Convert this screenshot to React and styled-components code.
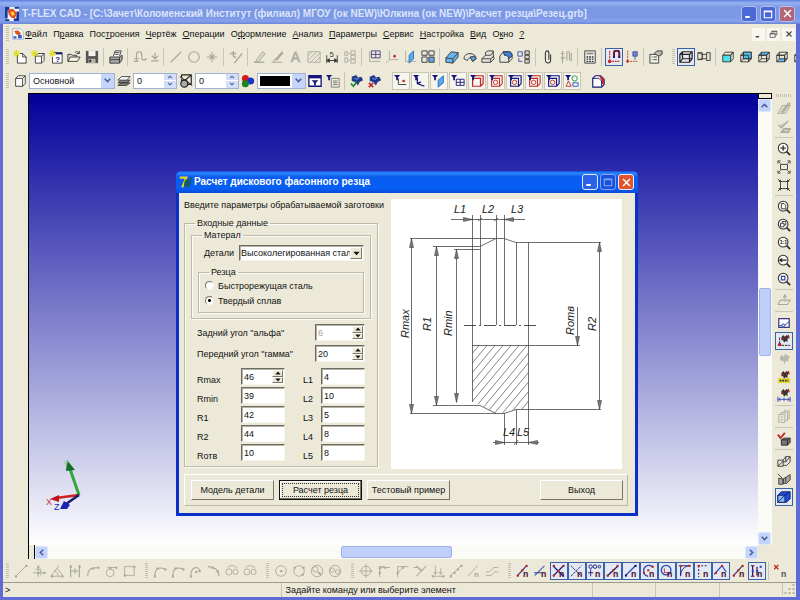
import styled, { createGlobalStyle, css } from "styled-components";
import { useState } from "react";

const GRAY = "#aaa89b";
const INK = "#333";
const NAVY = "#14147a";
const RED = "#c02626";

/* ---------- icons ---------- */

const Cube = ({ front = "none", top = "none", side = "none", back, color = INK }) => (
  <g stroke={color} strokeLinejoin="round">
    <path d="M2 6l3-3.500h9l-3 3.500z" fill={top} />
    <path d="M11 6l3-3.500v7.500l-3 3.500z" fill={side} />
    {back && <path d="M5 2.500h9v7.500H5z" fill={back} />}
    <path d="M2 6h9v7.500H2z" fill={front} />
    {front === "none" && <path d="M5 2.500V10h9M5 10l-3 3.500" />}
  </g>
);

const Star = () => <path d="M4 0v8M0 4h8M1 1l6 6M7 1L1 7" stroke="#dede1e" strokeWidth="1.300" />;

const Funnel = () => <path d="M0 1h7L4.500 4v3h-2V4z" fill={NAVY} />;

const Lens = ({ children }) => (
  <g>
    <circle cx="7" cy="7" r="5.500" fill="#fafaf4" stroke={INK} strokeWidth="1.200" />
    <path d="M11 11l4 4" stroke={INK} strokeWidth="2" />
    {children}
  </g>
);

const Magnet = () => (
  <text x="8" y="15" fontSize="10" fontWeight="bold" fill="#4a1030">
    n
  </text>
);

const Dots = ({ at, color = GRAY }) =>
  at.map(([x, y]) => <rect key={`${x}-${y}`} x={x - 1} y={y - 1} width="2.400" height="2.400" fill={color} />);

const Cutter = () => (
  <g fill="#333">
    <path d="M5 4l2-3 2 2 2-2 3 2-2 3v3l-2-1-2 2-1-3-2 0z" />
    <path d="M10 3l1 2M13 1l1 4M6 5l2 1" stroke={RED} strokeWidth="1.200" />
  </g>
);

const icons = {
  app: (
    <g>
      <path d="M0 0h16v16H0z" fill="#f4f4ff" />
      <path d="M0 0h5v4H3v9H0zM16 16h-6v-3h3V5h3zM0 14h5v2H0zM11 0h5v2h-5z" fill="#16389c" />
      <path d="M3 3l6-1 5 5-3 6-4-1-3-4z" fill="#e2521c" />
      <path d="M6 6l4-1 1 4-3 1z" fill="#ffd24a" />
    </g>
  ),
  doc: (
    <g>
      <path d="M1 1h10l4 4v10H1z" fill="#fff" stroke="#8ea2d8" />
      <path d="M3 4l5-1 4 4-3 3-4-2z" fill="#e2521c" />
      <path d="M8 9h5v5H8zM2 11h4v3H2z" fill="#3c5cc0" />
    </g>
  ),
  newDoc: (
    <g>
      <path d="M5 4h6l4 4v7H5z" fill="#fff" stroke={INK} />
      <path d="M11 4v4h4" stroke={INK} />
      <Star />
    </g>
  ),
  newPart: (
    <g>
      <path d="M5 7h7v8H5zM5 7l3-3h7l-3 3M15 4v8l-3 3" fill="#fff" stroke={INK} />
      <Star />
    </g>
  ),
  newProto: (
    <g>
      <path d="M4 3h11v12H4z" fill="#fff" stroke={INK} />
      <path d="M7 3h8v2H7z" fill={NAVY} />
      <text x="7" y="14" fontSize="9" fontWeight="bold" fill={NAVY}>?</text>
      <Star />
    </g>
  ),
  open: (
    <g stroke={INK}>
      <path d="M1 13V5h4l1 1h5v3" fill="#d8d6c6" />
      <path d="M1 13l3-5h11l-3 5z" fill="#f4f2e4" />
      <path d="M9 3c2-2 4-1 5 1M14 1v3h-3" />
    </g>
  ),
  save: (
    <g>
      <path d="M1 1h14v14H1z" fill="#555" />
      <path d="M4 1h8v6H4z" fill="#f2f2ea" />
      <path d="M4 10h8v5H4z" fill="#b4b4ac" />
      <path d="M5 11h2v3H5z" fill="#222" />
    </g>
  ),
  print: (
    <g stroke={INK}>
      <path d="M5 7l2-6h7l-2 6" fill="#fff" />
      <path d="M1 8h11l3-2v5l-3 4H1z" fill="#aaa" />
      <path d="M1 11h11M12 8v7M7 3h5M7 5h4" />
    </g>
  ),
  undo: <path d="M4 13V5c0-4 6-4 6 0v4c0 3 5 3 5 0M1 10h6M4 13v-3M1 13h5" stroke={GRAY} strokeWidth="1.400" />,
  redo: <path d="M8 1v9M3 6l5 5 5-5M2 14h12" stroke={GRAY} strokeWidth="2" />,
  line: <path d="M2 14L14 2" stroke={GRAY} strokeWidth="1.400" />,
  circle: <circle cx="8" cy="8" r="6" stroke={GRAY} strokeWidth="1.300" />,
  node: <path d="M8 2v12M2 8h12M5 5l6 6M11 5l-6 6" stroke={GRAY} strokeWidth="1.200" />,
  edit: <path d="M1 4h7M5 1v6l3 2M6 15L15 4" stroke={GRAY} strokeWidth="1.500" />,
  pencil: (
    <g stroke={GRAY}>
      <path d="M4 11l7-9 3 2-7 9-4 1z" fill="#d6d4c4" />
      <path d="M1 14h12" strokeWidth="1.500" />
    </g>
  ),
  brush: <path d="M13 2L5 11M14 3L6 12M1 14h12M3 13l2-3" stroke={GRAY} strokeWidth="1.300" />,
  letter: <text x="2" y="14" fontSize="16" fill={GRAY} stroke={GRAY} strokeWidth="0.500">A</text>,
  hatch: <path d="M1 2h14v12H1zM1 7l5-5M1 12L11 2M4 14L15 3M9 14l6-6" stroke={GRAY} />,
  dimension: (
    <g>
      <path d="M2 6v9M14 6v9M2 12h12M2 12l3-2v4zM14 12l-3-2v4z" stroke={INK} fill={INK} />
      <text x="5" y="8" fontSize="9" fill={INK}>5</text>
    </g>
  ),
  block: <path d="M2 2h3v4H2zM2 9h3v5H2zM9 1h5v4H9zM9 6h5v4H9zM9 11h5v4H9zM6 4h2M6 12h2" stroke={GRAY} />,
  plane: (
    <g>
      <path d="M3 1v12h12" stroke={GRAY} />
      <path d="M5 1h10v8H5zM5 5h10M10 1v8" stroke="#3c3c80" />
    </g>
  ),
  axis: (
    <g>
      <path d="M5 1v10h10M5 11l-4 4" stroke={GRAY} />
      <circle cx="11" cy="7" r="1.500" fill={RED} />
    </g>
  ),
  facet: (
    <g>
      <path d="M3 1v12h12" stroke={GRAY} />
      <path d="M7 6l5-5v9l-5 5z" fill="#5aa8e8" stroke="#2a6ac0" />
    </g>
  ),
  multi: (
    <g stroke={INK}>
      <path d="M1 1h6v5H1zM9 1h6v5H9zM1 8h6v6H1z" fill="#e8e8e0" />
      <path d="M9 8h6v6H9z" fill="#6aa6e6" />
    </g>
  ),
  extrude: (
    <g stroke={INK}>
      <path d="M1 9l6-7 8 1v5l-6 7-8-1z" fill="#6ab4ec" />
      <path d="M1 9l8 1 6-7M9 10v5" />
    </g>
  ),
  rotate: (
    <g stroke={INK}>
      <path d="M1 10c0-8 14-8 14 0l-4 3c0-5-5-5-6-1z" fill="#e4e4dc" />
      <path d="M8 8l5-1 2 3-4 3z" fill="#5aa0e0" />
    </g>
  ),
  boss: (
    <g stroke={INK}>
      <path d="M1 10l4-4V3l3-2h6v6l1 3-4 4H1z" fill="#e4e4dc" />
      <path d="M5 6h6l3-4M1 10h10v4M11 10l4-3" />
    </g>
  ),
  fillet: (
    <g stroke={INK}>
      <path d="M1 7l4-5h6c3 0 4 2 4 5v3l-4 4H1z" fill="#e8e8e0" />
      <path d="M5 2h6c3 0 4 2 4 5l-4 3c0-3-2-4-5-4z" fill="#3a80d8" />
      <path d="M11 9v5" />
    </g>
  ),
  assembly: (
    <g stroke={INK}>
      <path d="M9 1h5v4H9zM9 6h5v4H9zM9 11h5v4H9z" fill="#d8d8d0" />
      <path d="M1 2h5v5H1zM2 9v4h4" stroke="#3446b0" />
    </g>
  ),
  clip: <path d="M11 5v6c0 5-6 5-6 0V4c0-4 4-4 4 0v7" stroke={INK} strokeWidth="1.200" />,
  clips: <path d="M4 1v14M2 4h4M2 9h5M9 12V4c0-3 3-3 3 0v8M14 3v10" stroke={GRAY} strokeWidth="1.300" />,
  calc: (
    <g>
      <path d="M2 1h12v14H2z" fill="#f4f4ec" stroke={INK} />
      <path d="M4 3h8v2H4z" fill="#888" />
      <path d="M4 8h8M4 10.500h8M4 13h8" stroke={INK} strokeDasharray="2 1" strokeWidth="1.500" />
    </g>
  ),
  snap: (
    <g>
      <path d="M3 1v12h12" stroke={RED} strokeDasharray="2 1" strokeWidth="1.300" />
      <path d="M8 9V3c0-3 6-3 6 0v6" stroke="#6a1a3a" strokeWidth="2.300" />
      <path d="M7 8h2M13 8h2" stroke={NAVY} strokeWidth="2" />
      <circle cx="3" cy="13" r="2" fill={RED} />
    </g>
  ),
  pin: (
    <g>
      <path d="M3 1v12h12" stroke={RED} strokeDasharray="2 1" />
      <path d="M9 2h5v5H9zM11.500 7v4" fill="#7884c8" stroke="#4450a0" />
      <circle cx="3" cy="13" r="1.500" fill={RED} />
    </g>
  ),
  props: (
    <g stroke={INK}>
      <path d="M1 5h10v10H1z" fill="#f4f4ec" />
      <path d="M3 8h1M5 8h4M3 11h1M5 11h4" />
      <path d="M6 4l3-3h6v4l-4 2z" fill="#b8b8b0" />
    </g>
  ),
  wire: (
    <g stroke="#222" strokeWidth="1.400">
      <path d="M1 5h11v9H1zM4 2h11v8H4zM1 5l3-3M12 5l3-3M12 14l3-4M1 14l3-4" />
    </g>
  ),
  persp: <path d="M1 3h5v8H1zM1 3l5 2h5V3h4v9h-4v-2H6l-5 1M11 5v5M6 5v5" stroke={INK} />,
  cubeFront: <Cube front="#4fe0f0" />,
  cubeBack: <Cube back="#4fc0ea" />,
  cubeTop: <Cube top="#5ab8f0" />,
  cubeBottom: (
    <g>
      <path d="M2 13.500L5 10h9l-3 3.500z" fill="#5ab8f0" />
      <Cube />
    </g>
  ),
  cubeSide: <Cube side="#5ab8f0" />,
  page: <path d="M3 5h8v9H3zM3 5l3-3h8v9l-3 3M11 5l3-3" stroke={INK} fill="#fff" />,
  layers: (
    <g stroke={INK}>
      <path d="M1 13l4-3h10l-4 3zM1 10l4-3h10l-4 3z" fill="#888" />
      <path d="M1 7l4-4h10l-4 4z" fill="#fff" />
    </g>
  ),
  priority: (
    <g stroke="#222" strokeWidth="1.300">
      <path d="M3 1h11v11H3zM1 3l14 10M14 1L6 8" />
      <circle cx="6" cy="11" r="4" fill="#aaa" />
    </g>
  ),
  colors: (
    <g>
      <circle cx="5" cy="5" r="4" fill="#d81818" />
      <circle cx="11" cy="8" r="4" fill="#1c34c8" />
      <circle cx="5" cy="11" r="4" fill="#16861e" />
    </g>
  ),
  filter: (
    <g>
      <path d="M1 2h14v12H1z" fill="#fff" stroke={NAVY} strokeWidth="1.500" />
      <path d="M1 2h14v3H1z" fill={NAVY} />
      <path d="M4 7h8l-3 3v3H7v-3z" fill={NAVY} />
    </g>
  ),
  filterList: (
    <g>
      <Funnel />
      <path d="M6 5h9v10H6zM8 8h5M8 10h5M8 12h5" stroke="#777" />
    </g>
  ),
  select: (
    <g>
      <path d="M2 3l5-2 2 3 4-1 2 4-4 2-2 4-3-4-4-1z" fill="#20388c" />
      <path d="M5 5l3 1 2-1" stroke="#7ab4e8" />
      <path d="M1 11l3 3 4-6" stroke="#1a8a2a" strokeWidth="1.800" />
    </g>
  ),
  deselect: (
    <g>
      <path d="M2 3l5-2 2 3 4-1 2 4-4 2-2 4-3-4-4-1z" fill="#20388c" />
      <path d="M5 5l3 1 2-1" stroke="#7ab4e8" />
      <path d="M1 10l5 5M6 10l-5 5" stroke={RED} strokeWidth="1.800" />
    </g>
  ),
  fPoint: (
    <g>
      <path d="M5 5v7h9" stroke={INK} />
      <circle cx="11" cy="8" r="1.500" fill={RED} />
      <Funnel />
    </g>
  ),
  fAxis: (
    <g>
      <path d="M5 4v7l8 3M5 11l4-2" stroke={NAVY} strokeWidth="1.500" />
      <Funnel />
    </g>
  ),
  fFacet: (
    <g>
      <path d="M7 7l6-5v8l-6 5z" fill="#5aa8e8" stroke="#2a6ac0" />
      <Funnel />
    </g>
  ),
  fPlane: (
    <g>
      <path d="M6 6h9v7H6zM6 9.500h9M10.500 6v7" stroke={NAVY} />
      <Funnel />
    </g>
  ),
  fBody: (
    <g>
      <path d="M3 5h9v9H3zM6 2h9v9l-3 3" stroke={RED} strokeWidth="1.400" />
      <Funnel />
    </g>
  ),
  fHole: (
    <g>
      <path d="M3 5h9v9H3zM6 2h9v9l-3 3" stroke={RED} strokeWidth="1.200" />
      <circle cx="7.500" cy="9.500" r="2.500" stroke={RED} />
      <Funnel />
    </g>
  ),
  fEdge: (
    <g>
      <path d="M3 5h9v9H3zM6 2h9v9l-3 3" stroke={NAVY} strokeWidth="1.300" />
      <circle cx="7.500" cy="9.500" r="2.500" stroke={RED} />
      <Funnel />
    </g>
  ),
  fShapes: (
    <g>
      <path d="M1 14l3-6 3 6z" stroke={RED} />
      <circle cx="11" cy="5" r="3" stroke="#1a8a2a" />
      <path d="M9 10h6v4H9z" stroke="#2a50c0" />
      <Funnel />
    </g>
  ),
  corner: (
    <g>
      <path d="M2 5l3-3h6l4 4v6l-3 3H2z" fill="#fff" stroke={NAVY} strokeWidth="1.300" />
      <path d="M9 2h2l4 4v5l-3 1V7z" fill="#c82a2a" />
      <path d="M2 5h7l3 3v6" stroke={NAVY} />
    </g>
  ),
  accept: <path d="M2 6l3 3 8-8M5 14h8l2-4H8z" stroke={GRAY} strokeWidth="1.600" fill="#cfcdbf" />,
  sketch: (
    <g stroke={GRAY}>
      <path d="M1 13l5-9h9l-5 9z" fill="#dedccd" />
      <path d="M5 11l8-10 2 1-8 10z" fill="#b8b6a8" />
    </g>
  ),
  zoomIn: (
    <Lens>
      <path d="M4 7h6M7 4v6" stroke={INK} strokeWidth="1.500" />
    </Lens>
  ),
  zoomAll: <path d="M4 5h8v6H4zM1 4V1h3M12 1h3v3M15 12v3h-3M4 15H1v-3M2 2l2 2M14 2l-2 2M2 14l2-2M14 14l-2-2" stroke={INK} />,
  zoomFit: <path d="M4 4h8v8H4zM1 1l3 3M15 1l-3 3M1 15l3-3M15 15l-3-3M4 2v2H2M12 2v2h2M4 14v-2H2M12 14v-2h2" stroke={INK} />,
  zoomPage: (
    <Lens>
      <path d="M5 4h3l2 2v4H5z" stroke={INK} />
    </Lens>
  ),
  zoomPart: (
    <Lens>
      <path d="M4 6h4v4H4zM6 6V4h4v4H8" stroke={INK} />
    </Lens>
  ),
  zoomOne: (
    <Lens>
      <text x="3" y="9" fontSize="6" fontWeight="bold" fill="#222">1:1</text>
    </Lens>
  ),
  zoomBack: (
    <Lens>
      <path d="M3 7h8M6 5L3 7l3 2" stroke="#222" strokeWidth="1.300" />
    </Lens>
  ),
  zoomWin: (
    <Lens>
      <path d="M5 5h4v4H5z" stroke="#3440b0" strokeWidth="1.300" />
    </Lens>
  ),
  plan: <path d="M1 12l3-5h4M10 7h5l-3 5H1M9 1v8M7 4l2-3 2 3" stroke={GRAY} strokeWidth="1.200" />,
  render: (
    <g>
      <path d="M2 3h12v10H2z" fill="#fff" stroke="#3a3a80" strokeWidth="1.400" />
      <path d="M2 11h3l2 2 7-7M5 11l2-2 2 1" stroke="#5060b0" strokeWidth="1.200" />
    </g>
  ),
  cutSnap: (
    <g>
      <Cutter />
      <path d="M1 13h14M3 4v9" stroke="#111" strokeDasharray="3 1" />
      <circle cx="3" cy="12" r="2" fill={RED} />
    </g>
  ),
  cutGray: <path d="M3 6l3-3 2 3 1-4 3 2 3 1-2 3v3l-3-1-1 4-2-4-3 0z" fill="#bab8aa" />,
  cutList: (
    <g>
      <path d="M1 9h14v6H1z" fill="#e4d83a" />
      <path d="M3 12h10" stroke="#333" strokeWidth="2" strokeDasharray="2 1" />
      <Cutter />
    </g>
  ),
  cutDim: (
    <g>
      <Cutter />
      <path d="M1 10v6M15 10v6M1 13h14M8 11v4M4 11L2 13l2 2M12 11l2 2-2 2" stroke="#3048c0" />
    </g>
  ),
  pages: <path d="M2 5h7v9H2zM5 5V3h7v9H9M8 3V1h6v9h-2M4 8h3M4 11h3" stroke={GRAY} />,
  solidOk: (
    <g>
      <path d="M5 9l3-2h7v5l-3 3H5z" fill="#777" stroke="#222" />
      <path d="M5 9h7v6M12 9l3-2" stroke="#222" />
      <path d="M1 3l3 4 5-6" stroke={RED} strokeWidth="2" />
    </g>
  ),
  frame: <path d="M1 7h6v7H1zM7 7l3-4h5v6l-4 4H7M1 14l5-5h4l5-6M10 3v6" stroke={INK} />,
  frameHide: <path d="M1 2l5 5M2 7l5 1v6H2zM7 8l8-5v6l-4 4H7zM10 6v6" stroke={INK} fill="#a8a8a0" />,
  solid: (
    <g stroke="#101c60">
      <path d="M1 6l4-4h10v8l-4 4H1z" fill="#1c50d8" />
      <path d="M1 6h8v8H1z" fill="#8abaf4" />
      <path d="M1 14l8-8 6-4" />
    </g>
  ),
  c1: (
    <g>
      <path d="M2 14L14 2" stroke={GRAY} />
      <Dots at={[[2, 14], [14, 2]]} />
    </g>
  ),
  c2: (
    <g>
      <path d="M1 10h14M7 2v13M4 6h6v7" stroke={GRAY} />
      <Dots at={[[7, 3], [14, 10], [7, 10]]} />
    </g>
  ),
  c3: (
    <g>
      <path d="M1 14L10 2M1 14h14L8 5M5 8c3 0 4 3 4 6" stroke={GRAY} />
      <Dots at={[[2, 14], [14, 14]]} />
    </g>
  ),
  c4: (
    <g>
      <path d="M3 1v14M13 1v14M3 8h10M8 5v6" stroke={GRAY} strokeWidth="1.300" />
      <Dots at={[[3, 3], [13, 3]]} />
    </g>
  ),
  c5: (
    <g>
      <path d="M2 14C2 6 6 4 14 4" stroke={GRAY} strokeWidth="1.200" />
      <Dots at={[[8, 5], [14, 4]]} />
    </g>
  ),
  c6: (
    <g>
      <circle cx="7" cy="10" r="4.500" stroke={GRAY} />
      <path d="M4 4h10" stroke={GRAY} />
      <Dots at={[[14, 4], [7, 5]]} />
    </g>
  ),
  c7: (
    <g>
      <path d="M3 3h11v10H3z" stroke={GRAY} />
      <Dots at={[[3, 13], [14, 3]]} />
    </g>
  ),
  arc: (
    <g>
      <path d="M2 14C2 2 10 4 14 6" stroke={GRAY} strokeWidth="1.200" />
      <Dots at={[[2, 14], [5, 5], [14, 6]]} />
    </g>
  ),
  arcDot: (
    <g>
      <path d="M2 14C2 2 12 2 12 8" stroke={GRAY} strokeWidth="1.200" />
      <Dots at={[[2, 14], [12, 8], [8, 9]]} />
    </g>
  ),
  arcRight: (
    <g>
      <path d="M1 3c8 0 12 4 13 11" stroke={GRAY} strokeWidth="1.200" />
      <Dots at={[[6, 4], [12, 8]]} />
    </g>
  ),
  loops: (
    <g>
      <circle cx="4.500" cy="9" r="3.500" stroke={GRAY} />
      <circle cx="12" cy="9" r="3" stroke={GRAY} />
      <path d="M3 4c3-3 8-3 11 1" stroke={GRAY} />
    </g>
  ),
  ring: (
    <g>
      <circle cx="8" cy="8" r="6" stroke={GRAY} />
      <Dots at={[[8, 8]]} />
    </g>
  ),
  ringDots: (
    <g>
      <circle cx="8" cy="8" r="6" stroke={GRAY} />
      <Dots at={[[3, 4], [12, 12], [13, 4]]} />
    </g>
  ),
  ringIn: (
    <g stroke={GRAY}>
      <circle cx="8" cy="8" r="6.500" />
      <circle cx="6" cy="6" r="3" />
      <path d="M9 9l4 4" strokeWidth="2" />
    </g>
  ),
  ringTwo: (
    <g stroke={GRAY}>
      <circle cx="8" cy="8" r="6.500" />
      <circle cx="5" cy="7" r="2.500" />
      <circle cx="11" cy="9" r="2.500" />
    </g>
  ),
  cross: (
    <g stroke={GRAY}>
      <circle cx="8" cy="8" r="5.500" />
      <path d="M8 0v16M0 8h16" />
    </g>
  ),
  bend: (
    <g>
      <path d="M3 15V8c0-3 2-4 4-4h8M3 8V3h5" stroke={GRAY} />
      <Dots at={[[3, 4], [9, 4], [3, 10]]} />
    </g>
  ),
  bendCut: (
    <g>
      <path d="M3 15V3h12M3 10l6-6" stroke={GRAY} />
      <Dots at={[[9, 4], [3, 10]]} />
    </g>
  ),
  split: <path d="M1 4h5l4 4 5-6M4 2l4 5M4 14l7-8" stroke={GRAY} strokeWidth="1.300" />,
  drop: (
    <g>
      <path d="M1 14h14M5 2v9M11 5v6M3 9l2 3 2-3M9 9l2 3 2-3" stroke={GRAY} />
      <Dots at={[[2, 14], [14, 14]]} />
    </g>
  ),
  steps: (
    <g>
      <path d="M1 14L14 2" stroke={GRAY} />
      <Dots at={[[2, 14], [6, 10], [10, 6], [14, 2]]} />
    </g>
  ),
  offset: <path d="M1 13h6l4-4h4M1 9h4l5-5h5" stroke={GRAY} />,
  grayN: (
    <g>
      <path d="M1 14L12 2" stroke={GRAY} />
      <text x="8" y="15" fontSize="9" fontWeight="bold" fill={GRAY}>n</text>
    </g>
  ),
  n1: (
    <g>
      <path d="M1 14L12 2" stroke="#3048a8" strokeWidth="1.300" />
      <Dots at={[[2, 13], [7, 7], [12, 2]]} color={RED} />
      <Magnet />
    </g>
  ),
  n2: (
    <g>
      <path d="M1 13L12 2M0 10h9" stroke="#3048a8" strokeWidth="1.200" />
      <Magnet />
    </g>
  ),
  n3: (
    <g>
      <path d="M1 2l12 12M1 14L13 2" stroke={NAVY} strokeWidth="1.300" />
      <Dots at={[[2, 2], [13, 2], [2, 13], [7, 8]]} color={RED} />
      <Magnet />
    </g>
  ),
  n4: (
    <g>
      <path d="M1 2l12 12M1 14L13 2" stroke={NAVY} strokeDasharray="3 1" />
      <Magnet />
    </g>
  ),
  n5: (
    <g>
      <path d="M3 6v8M0 10h6" stroke={NAVY} />
      <circle cx="3" cy="3" r="2" stroke={NAVY} />
      <circle cx="8" cy="3" r="2" stroke={NAVY} />
      <circle cx="13" cy="3" r="1.500" stroke={NAVY} />
      <Magnet />
    </g>
  ),
  n6: (
    <g>
      <path d="M1 14L14 2" stroke={NAVY} strokeWidth="1.400" />
      <Dots at={[[2, 13], [8, 7], [13, 2]]} color={RED} />
      <Magnet />
    </g>
  ),
  n7: (
    <g>
      <path d="M2 13L13 2" stroke="#2848c8" strokeWidth="1.600" />
      <Dots at={[[2, 13], [13, 2]]} color={NAVY} />
      <Magnet />
    </g>
  ),
  n8: (
    <g>
      <path d="M12 3C6-1 1 4 2 9c0 3 3 5 5 5" stroke="#2848c8" strokeWidth="1.500" />
      <Dots at={[[12, 3], [7, 7], [2, 10]]} color={RED} />
      <Magnet />
    </g>
  ),
  n9: (
    <g>
      <circle cx="7" cy="7" r="5.500" stroke="#2848c8" strokeWidth="1.500" />
      <path d="M5 5v5h5" stroke={RED} />
      <Magnet />
    </g>
  ),
  n10: (
    <g>
      <path d="M1 2h13M3 2v12M3 13C3 7 8 2 13 2" stroke={NAVY} />
      <Dots at={[[3, 2], [13, 2]]} color={RED} />
      <Magnet />
    </g>
  ),
  n11: (
    <g>
      <path d="M2 2h12M3 2v13" stroke={NAVY} strokeWidth="1.300" strokeDasharray="2 2" />
      <Dots at={[[3, 2]]} color={RED} />
      <Magnet />
    </g>
  ),
  n12: (
    <g>
      <path d="M0 12L9 2l5 7" stroke="#2848c8" strokeWidth="1.300" />
      <Dots at={[[2, 10], [9, 2]]} color={RED} />
      <Magnet />
    </g>
  ),
  n13: (
    <g>
      <path d="M1 2h4M1 14h4M3 2v12M8 3v10" stroke="#501040" strokeWidth="1.400" />
      <Dots at={[[12, 3], [3, 8], [8, 8]]} color="#2848c8" />
      <Magnet />
    </g>
  ),
  nOff: (
    <g>
      <path d="M0 1l5 5M5 1L0 6" stroke={RED} strokeWidth="1.600" />
      <text x="8" y="15" fontSize="10" fontWeight="bold" fill="#555">n</text>
    </g>
  ),
  min: <path d="M3 12h6" stroke="currentColor" strokeWidth="2.600" />,
  max: <path d="M3 4h10v9H3zM3 5h10" stroke="currentColor" strokeWidth="1.500" />,
  restore: <path d="M5 5V2h9v7h-3M2 6h9v7H2zM2 7h9M5 3h9" stroke="currentColor" strokeWidth="1.300" />,
  close: <path d="M3 3l10 10M13 3L3 13" stroke="currentColor" strokeWidth="2.200" />,
  up: <path d="M3 11l5-5 5 5" stroke="currentColor" strokeWidth="2.800" />,
  down: <path d="M3 5l5 5 5-5" stroke="currentColor" strokeWidth="2.800" />,
  left: <path d="M11 3L6 8l5 5" stroke="currentColor" strokeWidth="2.800" />,
  right: <path d="M5 3l5 5-5 5" stroke="currentColor" strokeWidth="2.800" />,
  triUp: <path d="M1 12l7-8 7 8z" fill="currentColor" />,
  triDown: <path d="M1 4l7 8 7-8z" fill="currentColor" />,
  delphi: (
    <g>
      <path d="M1 2h8L4 14" stroke="#e8d81e" strokeWidth="2.600" />
      <path d="M7 13c0-5 1-8 3-8s-1 8 1 8 2-9 4-11" stroke="#1f5a2a" strokeWidth="1.800" />
    </g>
  ),
};

const Icon = ({ name, size = 14 }) => (
  <svg width={size} height={size} viewBox="0 0 16 16" fill="none" aria-hidden="true">
    {icons[name]}
  </svg>
);

/* ---------- data ---------- */

// "|" separator, ":" grip, a trailing "!" marks a pressed button
const mainTools =
  "newDoc newPart newProto open save | print | undo redo | line circle node | edit | pencil brush letter hatch dimension block | plane axis facet multi | extrude rotate boss fillet assembly | clip clips | calc | snap! pin | props : wire! persp | cubeFront cubeBack cubeTop cubeBottom cubeSide";
const filterTools = "fPoint fAxis fFacet fPlane fBody fHole fEdge fHole fEdge fShapes";
const sideTools =
  "sketch accept | zoomIn zoomAll zoomFit | zoomPage zoomPart zoomOne zoomBack zoomWin | plan | render cutSnap! cutGray cutList cutDim | pages | solidOk | frame frameHide solid!";
const bottomTools =
  ": c1 c2 c3 c4 c5 c6 c7 : arc arc arcDot arcRight loops loops : ring ringDots ringIn ringTwo : cross bend bendCut split drop steps grayN offset : n1 n2 n3! n4! n5! n6! n7! n8! n9! n10! n11! n12! n1 n13! | nOff";

const menu = [
  ["", "Ф", "айл"],
  ["П", "р", "авка"],
  ["Пос", "т", "роения"],
  ["", "Ч", "ертёж"],
  ["", "О", "перации"],
  ["О", "ф", "ормление"],
  ["", "А", "нализ"],
  ["", "П", "араметры"],
  ["", "С", "ервис"],
  ["", "Н", "астройка"],
  ["", "В", "ид"],
  ["О", "к", "но"],
  ["", "?", ""],
];

const sizes = [
  ["Rmax", "46", "L1", "4"],
  ["Rmin", "39", "L2", "10"],
  ["R1", "42", "L3", "5"],
  ["R2", "44", "L4", "8"],
  ["Rотв", "10", "L5", "8"],
];

/* ---------- pieces ---------- */

const Tools = ({ list, vertical }) =>
  list.split(" ").map((item, i) => {
    if (item === "|") return <Separator key={i} $vertical={vertical} />;
    if (item === ":") return <Grip key={i} />;
    const pressed = item.endsWith("!");
    const name = item.replace("!", "");
    return (
      <ToolButton key={i} type="button" aria-label={name} $pressed={pressed} $narrow={name === "redo"}>
        <Icon name={name} size={name === "redo" ? 10 : 14} />
      </ToolButton>
    );
  });

const Spin = ({ id, value, disabled }) => {
  const [val, setVal] = useState(value);
  return (
    <SpinBox>
      <input id={id} value={val} disabled={disabled} onChange={(e) => setVal(e.target.value)} />
      <SpinButtons>
        <button type="button" aria-label="Больше" onClick={() => setVal(String(Number(val) + 1))}>
          <Icon name="triUp" size={6} />
        </button>
        <button type="button" aria-label="Меньше" onClick={() => setVal(String(Number(val) - 1))}>
          <Icon name="triDown" size={6} />
        </button>
      </SpinButtons>
    </SpinBox>
  );
};

const FlatSpin = ({ label }) => (
  <FlatField $width={44}>
    <input defaultValue="0" aria-label={label} />
    <FlatArrows>
      <button type="button" aria-label="Больше">
        <Icon name="up" size={6} />
      </button>
      <button type="button" aria-label="Меньше">
        <Icon name="down" size={6} />
      </button>
    </FlatArrows>
  </FlatField>
);

// arrow heads: [x, y, direction]
const heads = [
  [81, 20, "r"], [113, 20, "l"], [20, 39, "u"], [20, 214, "d"], [45, 47, "u"], [45, 206, "d"], [65, 50, "u"],
  [65, 203, "d"], [208, 43, "u"], [208, 210, "d"], [186, 146, "d"], [113, 243, "r"], [137, 243, "l"],
];
const angle = { u: 0, r: 90, d: 180, l: 270 };

const PartDrawing = () => (
  <Drawing viewBox="0 0 231 270" role="img" aria-label="Эскиз детали">
    <defs>
      <clipPath id="section">
        <path d="M81 146h56v64h-12l-12 4h-8l-16-8-8-3z" />
      </clipPath>
    </defs>
    <g clipPath="url(#section)" stroke="#666" strokeWidth="0.800">
      {Array.from({ length: 16 }, (_, i) => (
        <path key={i} d={`M${30 + i * 8} 216l60-72`} />
      ))}
    </g>
    <g stroke="#4a4a4a" strokeWidth="0.800" fill="none">
      <path d="M81.500 16v187M89.500 16v110M105.500 16v110M113.500 16v110M125.500 43v83M137.500 43v203" />
      <path d="M60 20.500h74M19 39.500h94l12 4h85M42 47.500h47l16-8M63 50.500h26" />
      <path d="M20.500 39v175M45.500 47v159M65.500 50v153M208.500 43v167M186.500 108v38M81 146.500h108" />
      <path d="M42 206.500h47l16 8M19 214.500h94l12-4h85M113.500 214v32M125.500 210v36M102 243.500h46" />
      <path d="M73 126.500h74" stroke="#222" strokeDasharray="12 3 2 3" />
      <path d="M87 22l4-3M103 22l4-3M123 246l4-5" />
    </g>
    {heads.map(([x, y, dir]) => (
      <path
        key={`${x}-${y}`}
        d="M0 0L2 9H-2z"
        fill="#777"
        stroke="#333"
        strokeWidth="0.500"
        transform={`translate(${x + 0.5} ${y + 0.5}) rotate(${angle[dir]})`}
      />
    ))}
    <text x="63" y="14">L1</text>
    <text x="91" y="14">L2</text>
    <text x="120" y="14">L3</text>
    <text x="112" y="237">L4</text>
    <text x="126" y="237">L5</text>
    <text transform="translate(18 139) rotate(-90)">Rmax</text>
    <text transform="translate(40 132) rotate(-90)">R1</text>
    <text transform="translate(61 137) rotate(-90)">Rmin</text>
    <text transform="translate(183 136) rotate(-90)">Rотв</text>
    <text transform="translate(205 132) rotate(-90)">R2</text>
  </Drawing>
);

const CutterDialog = () => {
  const [tool, setTool] = useState("alloy");
  return (
    <Dialog role="dialog" aria-label="Расчет дискового фасонного резца">
      <DialogTitle>
        <Icon name="delphi" size={13} />
        <h2>Расчет дискового фасонного резца</h2>
        <WinButton type="button" aria-label="Свернуть"><Icon name="min" size={12} /></WinButton>
        <WinButton type="button" aria-label="Развернуть" $dim><Icon name="max" size={12} /></WinButton>
        <WinButton type="button" aria-label="Закрыть" $close><Icon name="close" size={11} /></WinButton>
      </DialogTitle>
      <DialogBody>
        <FormColumn>
          <Hint>Введите параметры обрабатываемой заготовки</Hint>
          <InputGroup>
            <legend>Входные данные</legend>
            <Material>
              <legend>Матерал</legend>
              <DetailRow>
                <label htmlFor="detail">Детали</label>
                <SelectBox>
                  <select id="detail">
                    <option>Высоколегированная стал</option>
                  </select>
                  <SelectArrow><Icon name="triDown" size={7} /></SelectArrow>
                </SelectBox>
              </DetailRow>
              <ToolGroup>
                <legend>Резца</legend>
                <label>
                  <input type="radio" name="tool" checked={tool === "steel"} onChange={() => setTool("steel")} />
                  Быстрорежущая сталь
                </label>
                <label>
                  <input type="radio" name="tool" checked={tool === "alloy"} onChange={() => setTool("alloy")} />
                  Твердый сплав
                </label>
              </ToolGroup>
            </Material>
            <Angles>
              <label htmlFor="alpha">Задний угол "альфа"</label>
              <Spin id="alpha" value="6" disabled />
              <label htmlFor="gamma">Передний угол "гамма"</label>
              <Spin id="gamma" value="20" />
            </Angles>
            <Sizes>
              {sizes.map(([r, rValue, l, lValue], i) => (
                <SizeRow key={r}>
                  <label htmlFor={r}>{r}</label>
                  {i === 0 ? <Spin id={r} value={rValue} /> : <TextInput id={r} defaultValue={rValue} />}
                  <label htmlFor={l}>{l}</label>
                  <TextInput id={l} defaultValue={lValue} />
                </SizeRow>
              ))}
            </Sizes>
          </InputGroup>
        </FormColumn>
        <PartDrawing />
      </DialogBody>
      <DialogActions>
        <DialogButton type="button">Модель детали</DialogButton>
        <DialogButton type="button" $main><span>Расчет резца</span></DialogButton>
        <DialogButton type="button">Тестовый пример</DialogButton>
        <DialogButton type="button" $last>Выход</DialogButton>
      </DialogActions>
    </Dialog>
  );
};

const App = () => (
  <>
    <GlobalStyle />
    <AppWindow>
      <TitleBar>
        <Icon name="app" size={14} />
        <h1>T-FLEX CAD - [C:\Зачет\Коломенский Институт (филиал) МГОУ (ок NEW)\Юлкина (ок NEW)\Расчет резца\Резец.grb]</h1>
        <WinButton type="button" aria-label="Свернуть" $soft><Icon name="min" size={12} /></WinButton>
        <WinButton type="button" aria-label="Развернуть" $soft><Icon name="max" size={12} /></WinButton>
        <WinButton type="button" aria-label="Закрыть" $soft $close><Icon name="close" size={11} /></WinButton>
      </TitleBar>
      <Chrome>
        <MenuBar>
          <Grip />
          <Icon name="doc" size={12} />
          <MenuList>
            {menu.map(([before, key, after], i) => (
              <button type="button" key={i}>
                {before}<u>{key}</u>{after}
              </button>
            ))}
          </MenuList>
          <MdiButton type="button" aria-label="Свернуть документ"><Icon name="min" size={9} /></MdiButton>
          <MdiButton type="button" aria-label="Восстановить документ"><Icon name="restore" size={9} /></MdiButton>
          <MdiButton type="button" aria-label="Закрыть документ"><Icon name="close" size={8} /></MdiButton>
        </MenuBar>
        <Toolbar $height={25}>
          <Grip />
          <Tools list={mainTools} />
        </Toolbar>
        <Toolbar $height={23}>
          <Grip />
          <Tools list="page" />
          <FlatField $width={86}>
            <select aria-label="Слой">
              <option>Основной</option>
            </select>
            <FlatDrop><Icon name="down" size={9} /></FlatDrop>
          </FlatField>
          <Tools list="layers" />
          <FlatSpin label="Уровень" />
          <Tools list="priority" />
          <FlatSpin label="Приоритет" />
          <Tools list="colors" />
          <FlatField $width={49}>
            <Swatch aria-label="Цвет" />
            <FlatDrop><Icon name="down" size={9} /></FlatDrop>
          </FlatField>
          <Tools list="filter filterList | select deselect" />
          <FilterGroup>
            {filterTools.split(" ").map((name, i) => (
              <SunkButton type="button" key={i} aria-label={name}>
                <Icon name={name} />
              </SunkButton>
            ))}
          </FilterGroup>
          <Tools list="corner" />
        </Toolbar>
        <Work>
          <LeftDock />
          <Document>
            <View>
              <Canvas>
                <Triad viewBox="0 0 40 54" aria-hidden="true">
                  <path d="M33 36L24 10" stroke="#2fa838" strokeWidth="3" />
                  <path d="M21 1l8 10-9 1z" fill="#17702a" />
                  <path d="M33 36L10 39" stroke="#d02020" strokeWidth="2.500" />
                  <path d="M4 40l9-4v7z" fill="#c01414" />
                  <path d="M33 36L20 45" stroke="#1a1a70" strokeWidth="2.500" />
                  <path d="M14 50l4-8 6 4-3 4z" fill="#1a24b0" />
                  <text x="0" y="46" fill="#c83040">X</text>
                  <text x="17" y="8" fill="#8ad090">Y</text>
                  <text x="8" y="51" fill="#2030b0">Z</text>
                </Triad>
                <CutterDialog />
              </Canvas>
              <VScroll>
                <Splitter />
                <ScrollButton type="button" aria-label="Вверх"><Icon name="up" size={9} /></ScrollButton>
                <ThumbTrack><VThumb /></ThumbTrack>
                <ScrollButton type="button" aria-label="Вниз"><Icon name="down" size={9} /></ScrollButton>
              </VScroll>
            </View>
            <HScroll>
              <Tab />
              <ScrollButton type="button" aria-label="Влево"><Icon name="left" size={9} /></ScrollButton>
              <HTrack><HThumb /></HTrack>
              <ScrollButton type="button" aria-label="Вправо"><Icon name="right" size={9} /></ScrollButton>
              <Corner />
            </HScroll>
          </Document>
          <SideBar>
            <SideGrip />
            <Tools list={sideTools} vertical />
          </SideBar>
        </Work>
        <Toolbar $height={24} $bottom>
          <Tools list={bottomTools} />
        </Toolbar>
        <StatusBar>
          <Prompt>&gt;</Prompt>
          <Message>Задайте команду или выберите элемент</Message>
          <Cell /><Cell /><Cell />
          <ResizeGrip viewBox="0 0 12 12" aria-hidden="true">
            <path d="M9 1h2v2H9zM9 5h2v2H9zM5 5h2v2H5zM9 9h2v2H9zM5 9h2v2H5zM1 9h2v2H1z" fill="#b4b19f" />
          </ResizeGrip>
        </StatusBar>
      </Chrome>
    </AppWindow>
  </>
);

export default App;

/* ---------- styles ---------- */

const face = "#ece9d8";
const sans = `"Liberation Sans", Arial, sans-serif`;

const GlobalStyle = createGlobalStyle`
  * {
    box-sizing: border-box;
  }
  body {
    margin: 0;
    font: 9px/12px ${sans};
    color: #111;
    background: ${face};
  }
  button, input, select {
    margin: 0;
    padding: 0;
    border: 0;
    border-radius: 0;
    background: none;
    font: inherit;
    color: inherit;
    outline: none;
  }
  select {
    appearance: none;
  }
  svg {
    flex: none;
    display: block;
  }
  h1, h2, fieldset {
    margin: 0;
    padding: 0;
    min-width: 0;
  }
`;

const AppWindow = styled.div`
  min-height: 100vh;
  display: flex;
  flex-direction: column;
  background: #5f6cd6;
`;

const TitleBar = styled.header`
  height: 24px;
  display: flex;
  align-items: center;
  gap: 3px;
  padding: 3px 5px 0 5px;
  background: linear-gradient(#5f7fe0, #98b2f2 3px, #7b98e4 7px, #7b98e6 17px, #86a2ea 21px, #6a84d8);
  & h1 {
    flex: 1;
    font: bold 10px/14px ${sans};
    color: #dbe4fa;
    white-space: nowrap;
    overflow: hidden;
  }
`;

const WinButton = styled.button`
  flex: none;
  width: 16px;
  height: 16px;
  display: flex;
  align-items: center;
  justify-content: center;
  border: 1px solid ${({ $soft }) => ($soft ? "#b4c2f0" : "#e6ecff")};
  border-radius: 3px;
  color: #fff;
  background: ${({ $close, $soft }) =>
    $close ? ($soft ? "#b46478" : "#e2532a") : $soft ? "#4a68d6" : "#2c62e8"};
  ${({ $dim }) =>
    $dim &&
    css`
      color: #7fa4f4;
      border-color: #7fa4f4;
      background: #1650dc;
    `}
`;

const Chrome = styled.div`
  flex: 1;
  display: flex;
  flex-direction: column;
  margin: 0 4px 3px 3px;
  background: ${face};
`;

const Grip = styled.span`
  flex: none;
  width: 3px;
  height: 16px;
  margin: 0 7px 0 3px;
  background: repeating-linear-gradient(#c4c1b0 0 1px, ${face} 1px 2px);
`;

const MenuBar = styled.nav`
  height: 20px;
  display: flex;
  align-items: center;
  padding-right: 1px;
  & > ${Grip} {
    margin-right: 3px;
  }
`;

const MenuList = styled.div`
  flex: 1;
  display: flex;
  gap: 6px;
  padding-left: 1px;
`;

const MdiButton = styled.button`
  width: 13px;
  height: 13px;
  margin-left: 2px;
  display: flex;
  align-items: center;
  justify-content: center;
  background: #f8f7f0;
  color: #444;
`;

const Toolbar = styled.div`
  height: ${({ $height }) => $height}px;
  display: flex;
  align-items: center;
  overflow: hidden;
  & > ${Grip} {
    margin-right: ${({ $bottom }) => ($bottom ? 3 : 2)}px;
  }
  & > * + ${Grip} {
    margin-left: 7px;
  }
  border-bottom: ${({ $bottom }) => ($bottom ? "1px solid #9c9a8b" : "0")};
`;

const ToolButton = styled.button`
  flex: none;
  width: ${({ $narrow }) => ($narrow ? 12 : 18)}px;
  height: 18px;
  display: flex;
  align-items: center;
  justify-content: center;
  border: 1px solid ${({ $pressed }) => ($pressed ? "#3a62a8" : "transparent")};
  background: ${({ $pressed }) => ($pressed ? "#e4e8f0" : "none")};
`;

const Separator = styled.span`
  flex: none;
  ${({ $vertical }) =>
    $vertical
      ? css`
          width: 18px;
          height: 1px;
          margin: 1px 0 2px;
        `
      : css`
          width: 1px;
          height: 18px;
          margin: 0 3px 0 2px;
        `}
  background: #c9c6b4;
`;

const FlatField = styled.div`
  flex: none;
  width: ${({ $width }) => $width}px;
  height: 16px;
  display: flex;
  border: 1px solid #9fb4d2;
  background: #fff;
  & input, & select {
    flex: 1;
    min-width: 0;
    padding-left: 3px;
  }
`;

const Swatch = styled.select`
  border: 2px solid #fff;
  background: #000;
`;

const FlatDrop = styled.span`
  width: 13px;
  display: flex;
  align-items: center;
  justify-content: center;
  color: #4a5f92;
  background: #c6d5fb;
`;

const FlatArrows = styled.span`
  width: 12px;
  display: flex;
  flex-direction: column;
  gap: 1px;
  & button {
    flex: 1;
    display: flex;
    align-items: center;
    justify-content: center;
    color: #4a5f92;
    background: #d2defa;
  }
`;

const FilterGroup = styled.div`
  display: flex;
  gap: 1px;
  padding: 0 8px;
`;

const SunkButton = styled.button`
  width: 18px;
  height: 18px;
  display: flex;
  align-items: center;
  justify-content: center;
  border: 1px solid #c9c6b4;
  background: #f6f5ee;
`;

const Work = styled.main`
  flex: 1;
  display: flex;
  padding-top: 1px;
`;

const LeftDock = styled.div`
  flex: none;
  width: 25px;
`;

const Document = styled.div`
  flex: 1;
  min-width: 0;
  display: flex;
  flex-direction: column;
`;

const View = styled.div`
  flex: 1;
  display: flex;
`;

const Canvas = styled.section`
  flex: 1;
  position: relative;
  min-height: 440px;
  border: solid #000;
  border-width: 1px 0 0 1px;
  background: linear-gradient(#00009a, #fff);
`;

const Triad = styled.svg`
  position: absolute;
  left: 17px;
  bottom: 32px;
  width: 40px;
  height: 54px;
  & text {
    font: 9px ${sans};
  }
`;

const VScroll = styled.div`
  width: 14px;
  display: flex;
  flex-direction: column;
  background: #fbfbf6;
`;

const Splitter = styled.span`
  height: 6px;
  border: 1px solid #000;
  background: ${face};
`;

const ScrollButton = styled.button`
  flex: none;
  width: 13px;
  height: 13px;
  display: flex;
  align-items: center;
  justify-content: center;
  border: 1px solid #dfe7fc;
  border-radius: 2px;
  color: #4a5f92;
  background: #c3d3fb;
`;

const ThumbTrack = styled.div`
  flex: 1;
  display: flex;
  flex-direction: column;
  justify-content: center;
`;

const thumb = css`
  border: 1px solid #9fb2ee;
  border-radius: 2px;
  background: #c0cffa;
`;

const VThumb = styled.span`
  height: 16%;
  margin: 0 1px;
  ${thumb}
`;

const HScroll = styled.div`
  height: 14px;
  display: flex;
  align-items: center;
  background: #fbfbf6;
  border-left: 1px solid #000;
`;

const Tab = styled.span`
  width: 6px;
  height: 14px;
  border-right: 1px solid #000;
  background: ${face};
`;

const HTrack = styled.div`
  flex: 1;
  display: flex;
  justify-content: center;
`;

const HThumb = styled.span`
  width: 16%;
  height: 12px;
  ${thumb}
`;

const Corner = styled.span`
  width: 14px;
  height: 14px;
  background: ${face};
`;

const SideBar = styled.aside`
  flex: none;
  width: 24px;
  display: flex;
  flex-direction: column;
  align-items: center;
`;

const SideGrip = styled.span`
  width: 16px;
  height: 3px;
  margin: 1px 0 3px;
  background: repeating-linear-gradient(90deg, #c4c1b0 0 1px, ${face} 1px 2px);
`;

const StatusBar = styled.footer`
  height: 14px;
  display: flex;
  align-items: stretch;
  line-height: 14px;
`;

const Prompt = styled.span`
  width: 35%;
  padding-left: 2px;
`;

const Message = styled.span`
  flex: 1;
  padding-left: 4px;
  border-left: 1px solid #c9c6b4;
`;

const Cell = styled.span`
  width: 8%;
  border-left: 1px solid #c9c6b4;
`;

const ResizeGrip = styled.svg`
  width: 14px;
  height: 12px;
  border-left: 1px solid #c9c6b4;
`;

/* dialog */

const Dialog = styled.section`
  position: absolute;
  left: 147px;
  top: 77px;
  width: 462px;
  display: flex;
  flex-direction: column;
  border: solid #0a30c8;
  border-width: 0 3px 3px;
  border-radius: 5px 5px 0 0;
  background: ${face};
`;

const DialogTitle = styled.header`
  height: 22px;
  display: flex;
  align-items: center;
  gap: 2px;
  margin: 0 -3px;
  padding: 0 4px 0 3px;
  border-radius: 5px 5px 0 0;
  background: linear-gradient(#0a4ae0, #2f86fa 2px, #0a5cee 6px, #0660f6 17px, #0a4cd8);
  & h2 {
    flex: 1;
    font: bold 10px/14px ${sans};
    color: #fff;
  }
`;

const DialogBody = styled.div`
  display: flex;
  align-items: flex-start;
  justify-content: space-between;
  padding: 6px 13px 5px 5px;
`;

const FormColumn = styled.div`
  width: 194px;
`;

const Hint = styled.p`
  margin: 0 0 6px;
  white-space: nowrap;
`;

const group = css`
  border: 1px solid #bdbaa8;
  box-shadow: inset 1px 1px #fbfaf4, 1px 1px #fbfaf4;
  & > legend {
    margin-left: 4px;
    padding: 0 2px;
    line-height: 12px;
  }
`;

const InputGroup = styled.fieldset`
  ${group}
  padding: 0 6px 4px;
`;

const Material = styled.fieldset`
  ${group}
  padding: 4px 6px 5px;
`;

const DetailRow = styled.div`
  display: flex;
  align-items: center;
  justify-content: space-between;
  padding-left: 6px;
`;

const sunken = css`
  border: 1px solid;
  border-color: #6e6c60 #f6f5ee #f6f5ee #6e6c60;
  box-shadow: inset 1px 1px #b4b2a4;
  background: #fff;
`;

const SelectBox = styled.div`
  width: 125px;
  height: 16px;
  display: flex;
  padding: 1px;
  ${sunken}
  & select {
    flex: 1;
    min-width: 0;
  }
`;

const raised = css`
  border: 1px solid;
  border-color: #fff #77756a #77756a #fff;
  background: ${face};
`;

const SelectArrow = styled.span`
  width: 12px;
  display: flex;
  align-items: center;
  justify-content: center;
  ${raised}
`;

const ToolGroup = styled.fieldset`
  ${group}
  margin-top: 5px;
  padding: 0 6px 4px;
  & > label {
    display: flex;
    align-items: center;
    gap: 4px;
    height: 15px;
  }
  & input {
    appearance: none;
    width: 9px;
    height: 9px;
    border: 1px solid #8e8c80;
    border-color: #77756a #f6f5ee #f6f5ee #77756a;
    border-radius: 50%;
    background: #fff;
  }
  & input:checked {
    background: radial-gradient(#000 0 1px, #fff 2px);
  }
`;

const Angles = styled.div`
  display: grid;
  grid-template-columns: 1fr 50px;
  align-items: center;
  row-gap: 4px;
  padding: 5px 6px 0;
`;

const SpinBox = styled.div`
  height: 17px;
  display: flex;
  padding: 1px;
  ${sunken}
  & input {
    flex: 1;
    min-width: 0;
    padding-left: 1px;
  }
  & input:disabled {
    color: #a5a394;
  }
`;

const SpinButtons = styled.span`
  width: 11px;
  display: flex;
  flex-direction: column;
  & button {
    flex: 1;
    min-height: 0;
    display: flex;
    align-items: center;
    justify-content: center;
    overflow: hidden;
    ${raised}
  }
`;

const Sizes = styled.div`
  display: grid;
  row-gap: 1px;
  padding: 6px 6px 0;
`;

const SizeRow = styled.div`
  display: grid;
  grid-template-columns: 44px 44px 1fr 44px;
  align-items: start;
  & > label {
    padding-top: 6px;
  }
  & > label:nth-of-type(2) {
    padding-left: 18px;
  }
`;

const TextInput = styled.input`
  width: 100%;
  height: 17px;
  padding-left: 2px;
  ${sunken}
`;

const Drawing = styled.svg`
  width: 231px;
  height: 270px;
  background: #fff;
  & text {
    font: italic 11px ${sans};
    fill: #222;
  }
`;

const DialogActions = styled.div`
  display: flex;
  gap: 5px;
  margin: 0 7px 7px 5px;
  padding: 5px 4px 5px 6px;
  border: 1px solid;
  border-color: #fff #bdbaa8 #bdbaa8 #fff;
`;

const DialogButton = styled.button`
  width: 83px;
  height: 20px;
  padding: 1px;
  white-space: nowrap;
  ${raised}
  margin-left: ${({ $last }) => ($last ? "auto" : "0")};
  ${({ $main }) =>
    $main &&
    css`
      border-color: #111;
      box-shadow: inset -1px -1px #77756a, inset 1px 1px #fff;
      & span {
        display: block;
        margin: 1px;
        border: 1px dotted #333;
      }
    `}
`;
